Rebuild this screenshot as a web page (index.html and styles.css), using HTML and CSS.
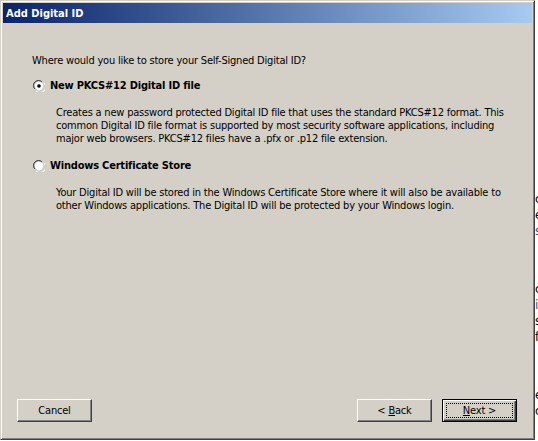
FILE: index.html
```html
<!DOCTYPE html>
<html>
<head>
<meta charset="utf-8">
<link rel="stylesheet" href="styles.css">
</head>
<body>
<div class="desk">
  <div class="window">
    <div class="titlebar"><span class="title">Add Digital ID</span></div>
    <div class="content">
      <p class="question">Where would you like to store your Self-Signed Digital ID?</p>
      <div class="option">
        <svg class="radio" width="12" height="12" viewBox="0 0 12 12">
          <path d="M1 8 A5.2 5.2 0 0 1 8 1" stroke="#808080" fill="none"/>
          <path d="M2 9 A4.5 4.5 0 0 1 9 2" stroke="#404040" fill="none"/>
          <path d="M3 11 A5.2 5.2 0 0 0 11 3" stroke="#ffffff" fill="none"/>
          <circle cx="6" cy="6" r="4.2" fill="#ffffff"/>
          <circle cx="6" cy="6" r="1.8" fill="#000000"/>
        </svg>
        <span class="label">New PKCS#12 Digital ID file</span>
      </div>
      <p class="desc">Creates a new password protected Digital ID file that uses the standard PKCS#12 format. This common Digital ID file format is supported by most security software applications, including major web browsers. PKCS#12 files have a .pfx or .p12 file extension.</p>
      <div class="option second">
        <svg class="radio" width="12" height="12" viewBox="0 0 12 12">
          <path d="M1 8 A5.2 5.2 0 0 1 8 1" stroke="#808080" fill="none"/>
          <path d="M2 9 A4.5 4.5 0 0 1 9 2" stroke="#404040" fill="none"/>
          <path d="M3 11 A5.2 5.2 0 0 0 11 3" stroke="#ffffff" fill="none"/>
          <circle cx="6" cy="6" r="4.2" fill="#ffffff"/>
        </svg>
        <span class="label">Windows Certificate Store</span>
      </div>
      <p class="desc">Your Digital ID will be stored in the Windows Certificate Store where it will also be available to other Windows applications. The Digital ID will be protected by your Windows login.</p>
    </div>
    <div class="buttons">
      <button class="btn"><span>Cancel</span></button>
      <div class="spacer"></div>
      <button class="btn"><span>&lt; <u>B</u>ack</span></button>
      <button class="btn default"><span class="focus"><span><u>N</u>ext &gt;</span></span></button>
    </div>
  </div>
  <div class="behind">
    <div class="frag f1">c</div>
    <div class="frag">e</div>
    <div class="frag blue">s</div>
    <div class="frag f4">c</div>
    <div class="frag blue">i</div>
    <div class="frag">s</div>
    <div class="frag">f</div>
    <div class="frag f8">e</div>
    <div class="frag">c</div>
  </div>
</div>
</body>
</html>
```
FILE: styles.css
```css
html, body {
  margin: 0;
  padding: 0;
  background: #ffffff;
}
.desk {
  display: flex;
  width: 538px;
  height: 441px;
  overflow: hidden;
  font-family: "DejaVu Sans Condensed", "Liberation Sans", Arial, sans-serif;
  font-size: 11px;
  letter-spacing: -0.2px;
  color: #000;
}
.window {
  box-sizing: border-box;
  width: 535px;
  height: 440px;
  flex: none;
  background: #d4d0c8;
  border-top: 1px solid #d4d0c8;
  border-left: 1px solid #d4d0c8;
  border-right: 1px solid #404040;
  border-bottom: 1px solid #404040;
  box-shadow: inset 1px 1px 0 #ffffff, inset -1px -1px 0 #808080;
  padding: 2px 2px 2px 2px;
  display: flex;
  flex-direction: column;
}
.titlebar {
  height: 20px;
  flex: none;
  background: linear-gradient(to right, #0a246a, #a6caf0);
  display: flex;
  align-items: center;
  padding-left: 3px;
}
.title {
  color: #fff;
  font-weight: bold;
  font-size: 11px;
  letter-spacing: 0;
}
.content {
  padding: 31px 0 0 29px;
  flex: 1;
}
p {
  margin: 0;
  line-height: 13px;
}
.question {
  margin-bottom: 12px;
}
.option {
  display: flex;
  align-items: center;
  height: 13px;
  gap: 5px;
  padding-left: 1px;
}
.option.second {
  margin-top: 14px;
}
.radio {
  flex: none;
  display: block;
}
.label {
  font-weight: bold;
}
.desc {
  margin-top: 14px;
  padding-left: 24px;
  width: 462px;
}
.buttons {
  display: flex;
  padding: 0 15px 15px 14px;
  gap: 10px;
  align-items: flex-end;
}
.spacer {
  flex: 1;
}
.btn {
  box-sizing: border-box;
  width: 75px;
  height: 23px;
  background: #d4d0c8;
  font-family: "DejaVu Sans Condensed", "Liberation Sans", Arial, sans-serif;
  font-size: 11px;
  letter-spacing: -0.2px;
  color: #000;
  border: 1px solid;
  border-color: #ffffff #404040 #404040 #ffffff;
  box-shadow: inset -1px -1px 0 #808080;
  padding: 0;
  margin: 0;
  display: flex;
  align-items: center;
  justify-content: center;
}
.btn.default {
  border: 1px solid #000;
  box-shadow: inset 1px 1px 0 #ffffff, inset -1px -1px 0 #404040, inset -2px -2px 0 #808080;
  padding: 3px;
}
.focus {
  flex: 1;
  align-self: stretch;
  border: 1px dotted #000;
  display: flex;
  align-items: center;
  justify-content: center;
}
.behind {
  flex: none;
  width: 3px;
  padding-top: 191px;
  overflow: hidden;
  font-size: 13px;
  line-height: 16px;
  color: #000;
}
.frag {
  height: 16px;
}
.frag.blue {
  color: #1a4fb0;
}
.f4 {
  margin-top: 42px;
}
.f8 {
  margin-top: 42px;
}
```
